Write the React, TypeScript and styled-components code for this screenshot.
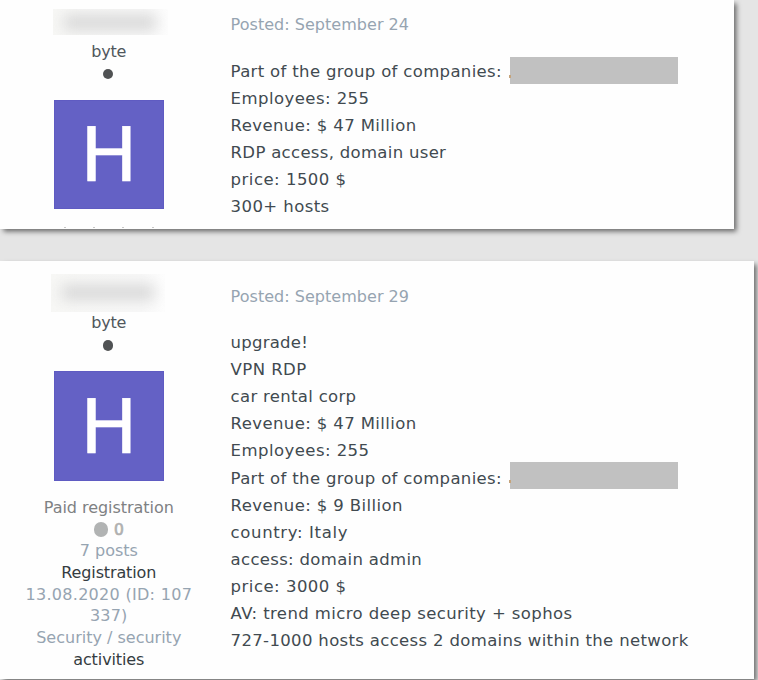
import React from "react";
import styled, { createGlobalStyle } from "styled-components";

const GlobalStyle = createGlobalStyle`
  * { box-sizing: border-box; }
  body { margin: 0; background: #e5e5e5; overflow: hidden; }
`;

const Page = styled.main`
  display: flex;
  flex-direction: column;
  align-items: flex-start;
  gap: 32.5px;
  height: 680px;
  overflow: hidden;
  background: #e5e5e5;
  font-family: "DejaVu Sans", Verdana, sans-serif;
`;

const Card = styled.article<{ $width: number; $height: number }>`
  display: flex;
  flex: none;
  width: ${(p) => p.$width}px;
  height: ${(p) => p.$height}px;
  background: #fefefe;
  box-shadow: 2.5px 2.5px 5px rgba(0, 0, 0, 0.55);
`;

const Author = styled.aside<{ $top: number }>`
  display: flex;
  flex-direction: column;
  align-items: center;
  flex: none;
  width: 217.6px;
  padding-top: ${(p) => p.$top}px;
`;

const HiddenName = styled.div<{ $height: number; $width: number; $shift: number; $after: number }>`
  display: flex;
  align-items: center;
  justify-content: center;
  flex: none;
  overflow: hidden;
  width: ${(p) => p.$width}px;
  height: ${(p) => p.$height}px;
  margin: 0 0 ${(p) => p.$after}px ${(p) => p.$shift}px;
  background: linear-gradient(90deg, #f7f7f5, #f8f8f8 80%, #fdfdfd);

  &::before {
    content: "";
    width: 92px;
    height: 15px;
    background: #d8d8d8;
    filter: blur(7px);
  }
`;

const AuthorLine = styled.div<{ $color: string; $spacing: number }>`
  flex: none;
  height: 21.65px;
  font-size: 16px;
  line-height: 21.65px;
  letter-spacing: ${(p) => p.$spacing}px;
  color: ${(p) => p.$color};
  white-space: nowrap;
`;

const StatusDot = styled.span`
  flex: none;
  width: 10.4px;
  height: 10.4px;
  margin: 6.4px 2px 20.5px 0;
  border-radius: 50%;
  background: #505254;
`;

const Avatar = styled.div`
  display: flex;
  align-items: center;
  justify-content: center;
  flex: none;
  width: 109.5px;
  height: 109.6px;
  background: #6461c5;
  box-shadow: inset 0 0 0 1px #5f5bc2;
  color: #fff;
  font-size: 74px;
  line-height: 109px;
`;

const Initial = styled.span`
  padding-top: 3px;
  transform: scaleX(1.03);
  -webkit-text-stroke: 0.6px #fff;
`;

const Details = styled.div`
  display: flex;
  flex-direction: column;
  align-items: center;
  flex: none;
  padding-top: 16.4px;
`;

/* Ascender tips of the line that continues below the card. */
const AscenderTips = styled.div`
  display: flex;
  flex: none;
  justify-content: space-between;
  width: 90px;
  margin-top: 18.2px;
`;

const Tip = styled.span`
  width: 2px;
  height: 1px;
  background: #c8c8c8;
`;

const Reputation = styled.div`
  display: flex;
  align-items: center;
  gap: 6px;
  height: 21.65px;
  font-size: 15.5px;
  color: #b0b0b0;
  -webkit-text-stroke: 0.7px #b0b0b0;

  &::before {
    content: "";
    width: 14.4px;
    height: 14.4px;
    border-radius: 50%;
    background: #b1b3b3;
  }
`;

const Content = styled.section<{ $top: number; $gap: number }>`
  display: flex;
  flex-direction: column;
  gap: ${(p) => p.$gap}px;
  padding: ${(p) => p.$top}px 0 0 13px;
`;

const Posted = styled.time`
  height: 22px;
  font-size: 16px;
  line-height: 22px;
  letter-spacing: 0.03px;
  color: #96a4b1;
  white-space: nowrap;
`;

const Message = styled.div`
  display: flex;
  flex-direction: column;
`;

const MessageLine = styled.div<{ $spacing: number }>`
  display: flex;
  height: 27.05px;
  font-size: 16.5px;
  line-height: 27.05px;
  letter-spacing: ${(p) => p.$spacing - 0.02}px;
  color: #414a50;
  white-space: nowrap;
`;

const Redaction = styled.span<{ $lift: number }>`
  display: flex;
  align-items: flex-end;
  width: 168.5px;
  height: 27px;
  margin: -${(p) => p.$lift}px 0 0 7.5px;
  padding-bottom: 6px;
  background: linear-gradient(90deg, transparent 1.5px, #c1c1c1 1.5px);

  &::before {
    content: "";
    width: 1.5px;
    height: 3px;
    background: #c5a47c;
  }
`;

type Line = { text: string; spacing: number; redacted?: boolean };

const firstPost: Line[] = [
  { text: "Part of the group of companies:", spacing: 0.36, redacted: true },
  { text: "Employees: 255", spacing: 0.47 },
  { text: "Revenue: $ 47 Million", spacing: 0.41 },
  { text: "RDP access, domain user", spacing: 0.33 },
  { text: "price: 1500 $", spacing: 0.51 },
  { text: "300+ hosts", spacing: 0.44 },
];

const secondPost: Line[] = [
  { text: "upgrade!", spacing: 0.25 },
  { text: "VPN RDP", spacing: 0.45 },
  { text: "car rental corp", spacing: 0.33 },
  { text: "Revenue: $ 47 Million", spacing: 0.41 },
  { text: "Employees: 255", spacing: 0.47 },
  { text: "Part of the group of companies:", spacing: 0.36, redacted: true },
  { text: "Revenue: $ 9 Billion", spacing: 0.41 },
  { text: "country: Italy", spacing: 0.66 },
  { text: "access: domain admin", spacing: 0.34 },
  { text: "price: 3000 $", spacing: 0.51 },
  { text: "AV: trend micro deep security + sophos", spacing: 0.42 },
  { text: "727-1000 hosts access 2 domains within the network", spacing: 0.36 },
];

const muted = "#96a4b1";
const dark = "#353c41";

const Lines = ({ lines, lift }: { lines: Line[]; lift: number }) => (
  <Message>
    {lines.map((line) => (
      <MessageLine key={line.text} $spacing={line.spacing}>
        {line.text}
        {line.redacted && <Redaction $lift={lift} />}
      </MessageLine>
    ))}
  </Message>
);

const Identity = () => (
  <>
    <AuthorLine $color="#50575c" $spacing={-0.2}>byte</AuthorLine>
    <StatusDot />
    <Avatar>
      <Initial>H</Initial>
    </Avatar>
  </>
);

export default function App() {
  return (
    <>
      <GlobalStyle />
      <Page>
        <Card $width={734} $height={228.5}>
          <Author $top={8.9}>
            <HiddenName $width={115} $height={26.5} $shift={3} $after={5.2} />
            <Identity />
            <AscenderTips>
              <Tip />
              <Tip />
              <Tip />
              <Tip />
            </AscenderTips>
          </Author>
          <Content $top={14.4} $gap={21.4}>
            <Posted>Posted: September 24</Posted>
            <Lines lines={firstPost} lift={0.8} />
          </Content>
        </Card>
        <Card $width={754} $height={418}>
          <Author $top={12.7}>
            <HiddenName $width={114} $height={38} $shift={-1} $after={0.5} />
            <Identity />
            <Details>
              <AuthorLine $color="#7e8183" $spacing={-0.05}>Paid registration</AuthorLine>
              <Reputation>0</Reputation>
              <AuthorLine $color={muted} $spacing={0}>7 posts</AuthorLine>
              <AuthorLine $color={dark} $spacing={-0.13}>Registration</AuthorLine>
              <AuthorLine $color={muted} $spacing={0.3}>13.08.2020 (ID: 107</AuthorLine>
              <AuthorLine $color={muted} $spacing={0.2}>337)</AuthorLine>
              <AuthorLine $color={muted} $spacing={0}>Security / security</AuthorLine>
              <AuthorLine $color={dark} $spacing={-0.1}>activities</AuthorLine>
            </Details>
          </Author>
          <Content $top={25.2} $gap={21.1}>
            <Posted>Posted: September 29</Posted>
            <Lines lines={secondPost} lift={2.2} />
          </Content>
        </Card>
      </Page>
    </>
  );
}
